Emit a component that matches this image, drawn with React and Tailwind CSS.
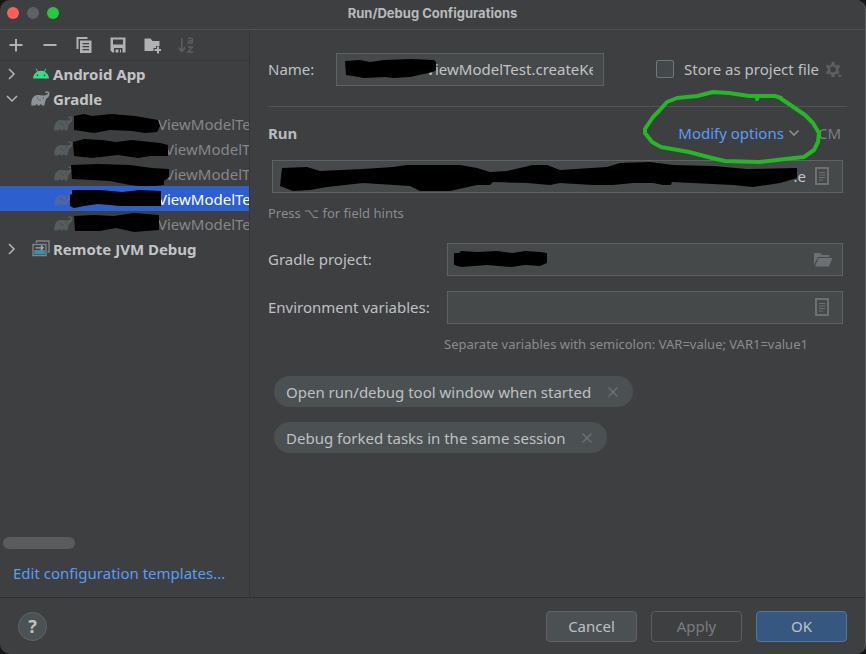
import { useState } from "react";

const tests = [
  { label: "ViewModelTest", indent: "pl-[104px]", mask: "M74 5 L84 3 L92 5 L112 3 L135 5 L158 9 L160 15 L157 21 L145 22 L132 20 L110 19 L94 22 L74 19 Z" },
  { label: "ViewModelTest", indent: "pl-[111px]", mask: "M73 6 L84 3 L102 4 L116 6 L132 4 L160 7 L168 9 L168 20 L150 20 L138 22 L118 19 L92 22 L74 20 Z" },
  { label: "ViewModelTest", indent: "pl-[111px]", mask: "M71 4 L98 3 L130 4 L152 7 L169 8 L169 16 L164 20 L164 24 L148 26 L130 24 L110 20 L72 18 Z" },
  { label: "ViewModelTest", indent: "pl-[104px]", mask: "M72 4 L100 4 L122 6 L140 4 L161 5 L161 20 L120 20 L98 18 L84 20 L74 22 L70 20 L70 9 L72 8 Z" },
  { label: "ViewModelTest", indent: "pl-[104px]", mask: "M74 5 L94 4 L114 5 L134 2 L159 4 L159 19 L134 21 L116 17 L100 20 L75 20 Z" },
];

const GradleIcon = ({ className }) => (
  <svg viewBox="0 0 19 15" className={`h-[15px] w-[19px] shrink-0 ${className}`} fill="currentColor" aria-hidden="true">
    <path d="M.4 14.500 C-.2 10 1.500 5.200 5 4.200 C8 3.300 10.500 4.600 13 4.400 C15 4.200 16.700 3.500 16.900 2.500 C17 1.600 15.800 1.300 15 2.200 L13.800 1.200 C15.200 -.4 18.200 .2 18.500 2.200 C18.800 4.600 17 6.600 15.600 7.600 C14.600 8.500 14.500 10 14.200 11.200 C13.900 12.400 13.500 13.200 13.300 14.500 L11 14.500 C10.800 12.700 9 12.700 8.800 14.500 L6.800 14.500 C6.600 12.700 4.700 12.700 4.500 14.500 Z" />
    <path d="M6.500 6 C6 8.500 8 9.800 10 8.800" fill="none" stroke="#3d3f41" strokeOpacity=".6" strokeWidth=".7" />
    <circle cx="12.300" cy="7" r=".6" fill="#3d3f41" />
  </svg>
);

const AndroidIcon = () => (
  <svg viewBox="0 0 16 11" className="h-[11px] w-4 shrink-0" fill="#3ddc84" aria-hidden="true">
    <path d="M0 10.500 C.2 7.500 1.800 5 4.200 3.700 L2.600 .8 L3.300 .4 L5 3.300 C7 2.500 9 2.500 11 3.300 L12.700 .4 L13.400 .8 L11.800 3.700 C14.200 5 15.800 7.500 16 10.500 Z" />
    <circle cx="4.500" cy="7.400" r=".8" fill="#3d3f41" />
    <circle cx="11.500" cy="7.400" r=".8" fill="#3d3f41" />
  </svg>
);

const RemoteIcon = () => (
  <svg viewBox="0 0 18 17" className="h-[17px] w-[18px] shrink-0" fill="none" aria-hidden="true">
    <path d="M4.500 3 V1 H17 V12 H15.500" stroke="#7f8487" strokeWidth="1.400" />
    <path d="M1 4.500 H14 V15.500 H1 Z" stroke="#7f8487" strokeWidth="1.400" />
    <path d="M2.200 10 H12.800 V14.300 H2.200 Z" fill="#3d8fb0" />
    <path d="M3.500 7.800 H11 M8.800 5.500 L11.200 7.800 L8.800 10" stroke="#a9adb0" strokeWidth="1.200" />
  </svg>
);

const Chevron = ({ open }) => (
  <svg viewBox="0 0 12 12" className="h-3 w-3 shrink-0" fill="none" stroke="#b4b6b8" strokeWidth="1.500" aria-hidden="true">
    <path d={open ? "M1 3 L6 8 L11 3" : "M3 1 L8 6 L3 11"} />
  </svg>
);

const NoteIcon = () => (
  <svg viewBox="0 0 14 18" className="h-[18px] w-3.5" fill="none" stroke="#6c7072" aria-hidden="true">
    <path d="M1 1 H13 V17 H1 Z" strokeWidth="2" />
    <path d="M4 5.500 H10 M4 8 H10 M4 10.500 H10 M4 13 H8" strokeWidth="1" />
  </svg>
);

const FolderIcon = () => (
  <svg viewBox="0 0 20 15" className="h-[15px] w-5" fill="#6c7072" aria-hidden="true">
    <path d="M1 13 V1 H7 L9 3 H16.500 V5 H5 Z" />
    <path d="M5.500 6 H19.500 L16 14.500 H2 Z" />
  </svg>
);

const GearIcon = () => (
  <svg viewBox="0 0 18 18" className="h-[18px] w-[18px] shrink-0" fill="none" stroke="#5d5f61" aria-hidden="true">
    <circle cx="8" cy="8.500" r="4.200" strokeWidth="2.600" />
    <path d="M8 1 V4 M8 13 V16 M1.500 4.750 L4 6.200 M12 10.800 L14 12 M1.500 12.250 L4 10.800 M12 6.200 L14.500 4.750" strokeWidth="3" />
    <path d="M11.500 13.500 H18 L14.800 17 Z" fill="#5d5f61" stroke="#3d3f41" strokeWidth=".8" />
  </svg>
);

const ToolButton = ({ label, disabled, children }) => (
  <button type="button" aria-label={label} disabled={disabled} className={disabled ? "text-[#5c5e60]" : "text-[#b0b2b4]"}>
    <svg viewBox="0 0 18 18" className="h-[18px] w-[18px]" fill="currentColor" aria-hidden="true">
      {children}
    </svg>
  </button>
);

const Toolbar = () => (
  <div className="flex h-[31px] items-center gap-4 border-b border-[#353739] px-[7px]">
    <ToolButton label="Add">
      <path d="M8 3 H10 V8 H15.500 V10 H10 V15.500 H8 V10 H2.500 V8 H8 Z" />
    </ToolButton>
    <ToolButton label="Remove">
      <path d="M2.500 8 H15.500 V10 H2.500 Z" />
    </ToolButton>
    <ToolButton label="Copy">
      <path d="M1.500 1 H12.500 V3 H3.500 V13 H1.500 Z" />
      <path fillRule="evenodd" d="M5 4.500 H16.500 V17 H5 Z M7.500 7 V8.200 H14 V7 Z M7.500 10 V11.200 H14 V10 Z M7.500 13 V14.200 H14 V13 Z" />
    </ToolButton>
    <ToolButton label="Save">
      <path fillRule="evenodd" d="M1.500 1.500 H16.500 V16.500 H13.500 V12 H5 V16.500 H3.500 L1.500 14.500 Z M4 3.500 V8.500 H14 V3.500 Z" />
      <path d="M6.500 13.500 H9.500 V16.500 H6.500 Z M11 13.500 H12 V16.500 H11 Z" />
    </ToolButton>
    <ToolButton label="New folder">
      <path d="M1.500 2.500 H7.500 L9.500 5 H16.500 V10 H13 V12 H10.500 V15 H1.500 Z" />
      <path d="M14 10.500 H16 V13 H18 V15 H16 V17.500 H14 V15 H11.500 V13 H14 Z" />
    </ToolButton>
    <ToolButton label="Sort" disabled>
      <path d="M4 2 H5.500 V13 L8 10.500 V13 L4.700 16.500 L1.500 13 V10.500 L4 13 Z" />
      <path d="M11 3 C12.500 1.500 15.500 1.800 15.500 4 V7.500 M15.500 4.800 C13 4.500 11 5 11 6.300 C11 7.800 14 7.800 15.500 6 M11 11 H15.500 L11 16 H16" fill="none" stroke="currentColor" strokeWidth="1.400" />
    </ToolButton>
  </div>
);

const Group = ({ name, open, children }) => (
  <button type="button" aria-expanded={!!open} className="flex h-[25px] w-full items-center px-1.5 text-left font-bold text-[#c2c4c6]">
    <Chevron open={open} />
    <span className="ml-2.5 flex w-[25px] items-center justify-center">{children}</span>
    <span className="whitespace-nowrap">{name}</span>
  </button>
);

const Sidebar = () => {
  const [selected, setSelected] = useState(3);

  return (
    <aside className="flex w-[250px] shrink-0 flex-col border-r border-[#333537]">
      <Toolbar />
      <div className="flex-1">
        <Group name="Android App">
          <AndroidIcon />
        </Group>
        <Group name="Gradle" open>
          <GradleIcon className="text-[#8b949b]" />
        </Group>
        {tests.map((test, i) => (
          <button
            key={i}
            type="button"
            onClick={() => setSelected(i)}
            className={`relative flex h-[25px] w-full items-center overflow-x-clip pl-[54px] text-left ${
              selected === i ? "bg-[#2d5fce] text-white" : "text-[#85878a]"
            }`}
          >
            <GradleIcon className={selected === i ? "-mr-[19px] text-[#4a68a8]" : "-mr-[19px] text-[#555c5e]"} />
            <span className={test.indent}>{test.label}</span>
            <svg viewBox="0 0 250 25" className="absolute left-0 top-0 h-[25px] w-[250px] overflow-visible" aria-hidden="true">
              <path d={test.mask} />
            </svg>
          </button>
        ))}
        <Group name="Remote JVM Debug">
          <RemoteIcon />
        </Group>
      </div>
      <div className="px-[3px]">
        <div className="h-3 w-[72px] rounded-full bg-[#595b5d]"></div>
      </div>
      <div className="px-[13px] py-3">
        <a href="#templates" className="block whitespace-nowrap leading-6 text-[#589df6]">
          Edit configuration templates...
        </a>
      </div>
    </aside>
  );
};

const inputStyle = "h-[33px] w-full border border-[#5f6264] bg-[#45494a] pb-0.5 text-[#c2c4c6] outline-none";

const Chip = ({ children }) => (
  <div className="flex h-[31px] items-center gap-4 rounded-full bg-[#4b5052] pl-3 pr-3.5 text-[#bfc1c3]">
    <span>{children}</span>
    <button type="button" aria-label={`Remove ${children}`}>
      <svg viewBox="0 0 12 12" className="h-3 w-3" fill="none" stroke="#6f7274" strokeWidth="1.300" aria-hidden="true">
        <path d="M1.500 1.500 L10.500 10.500 M10.500 1.500 L1.500 10.500" />
      </svg>
    </button>
  </div>
);

const ConfigForm = () => (
  <main className="min-w-0 flex-1 pl-[18px] pr-[18px] pt-[23px]">
    <div className="flex items-center border-b border-[#515355] pb-5">
      <label htmlFor="name" className="w-[68px] pb-0.5">
        Name:
      </label>
      <div className="relative w-[268px]">
        <input id="name" defaultValue="ViewModelTest.createKey" className={`${inputStyle} pl-[89px] pr-2.5`} />
        <svg viewBox="0 0 268 33" className="absolute left-0 top-0 h-[33px] w-[268px]" aria-hidden="true">
          <path d="M9 8 L24 7 L34 9 L48 7 L75 6 L98 7 L100 9 L100 17 L97 19 L88 21 L74 24 L58 25 L50 24 L28 25 L10 22 Z" />
        </svg>
      </div>
      <label className="ml-auto flex items-center gap-2.5 whitespace-nowrap pb-0.5">
        <input type="checkbox" className="h-[18px] w-[18px] appearance-none rounded-xs border border-[#727577] bg-[#43494a]" />
        Store as project file
      </label>
      <button type="button" aria-label="Storage settings" className="ml-1.5 mr-1">
        <GearIcon />
      </button>
    </div>

    <div className="flex h-[53px] items-center pb-0.5">
      <h2 className="font-bold text-[#b9bbbd]">Run</h2>
      <div className="relative ml-auto">
        <button type="button" className="flex items-center gap-1 text-[#589df6]">
          Modify options
          <svg viewBox="0 0 12 12" className="h-3 w-3" fill="none" stroke="#8b8d8f" strokeWidth="1.600" aria-hidden="true">
            <path d="M1.500 3.500 L6 8 L10.500 3.500" />
          </svg>
        </button>
        <svg
          viewBox="640 88 190 80"
          className="pointer-events-none absolute -right-[29px] -top-[34px] z-10 h-20 w-[190px] max-w-none"
          fill="none"
          stroke="#22b922"
          strokeWidth="4"
          strokeLinecap="round"
          strokeLinejoin="round"
          aria-hidden="true"
        >
          <path d="M782 98 L776 96 L750 96 L730 93 L714 92 L698 96 L678 98 L668 102 L660 111 L654 117 L646 129 L646 133 L653 142 L662 147 L690 152 L713 158 L726 161 L760 162 L786 159 L805 157 L815 150 L819 142 L820 133 L814 123 L806 115 L790 104 L781 98 M758 99 L759 97" />
        </svg>
      </div>
      <span className="ml-[18px] mr-1.5 text-[#7c7e80]">CM</span>
    </div>

    <div className="relative ml-1 mr-1">
      <input aria-label="Run tasks" defaultValue=".e" className={`${inputStyle} pl-3 pr-[36px] text-right`} />
      <svg viewBox="0 0 571 33" preserveAspectRatio="none" className="absolute left-0 top-0 h-full w-full" aria-hidden="true">
        <path d="M10 8 L35 7 L48 11 L91 9 L121 7 L135 5 L188 5 L205 8 L218 12 L235 11 L261 5 L275 5 L288 10 L335 7 L348 3 L378 2 L401 5 L441 6 L475 9 L525 8 L525 18 L508 23 L481 27 L461 25 L400 22 L399 25 L391 25 L381 23 L361 23 L341 25 L321 25 L288 23 L278 25 L255 23 L221 22 L218 25 L205 25 L178 31 L148 31 L138 26 L91 23 L55 27 L38 30 L21 31 L8 26 Z" />
      </svg>
      <button type="button" aria-label="Expand tasks" className="absolute right-3.5 top-[7px]">
        <NoteIcon />
      </button>
    </div>
    <p className="mt-2.5 text-[13px] leading-5 text-[#8a8c8e]">Press ⌥ for field hints</p>

    <div className="mt-5 flex items-center pr-1">
      <label htmlFor="project" className="w-[179px] shrink-0 pb-0.5">
        Gradle project:
      </label>
      <div className="relative flex-1">
        <input id="project" className={`${inputStyle} pl-2.5 pr-10`} />
        <svg viewBox="0 0 120 33" className="absolute left-0 top-0 h-[33px] w-[120px]" aria-hidden="true">
          <path d="M7 10 L12 10 L14 8 L30 9 L50 8 L66 10 L78 8 L93 9 L100 10 L100 20 L93 23 L78 22 L64 24 L40 22 L14 24 L7 22 Z" />
        </svg>
        <button type="button" aria-label="Browse" className="absolute right-2.5 top-[9px]">
          <FolderIcon />
        </button>
      </div>
    </div>
    <div className="mt-[15px] flex items-center pr-1">
      <label htmlFor="env" className="w-[179px] shrink-0 whitespace-nowrap pb-0.5">
        Environment variables:
      </label>
      <div className="relative flex-1">
        <input id="env" className={`${inputStyle} pl-2.5 pr-10`} />
        <button type="button" aria-label="Edit variables" className="absolute right-3.5 top-[7px]">
          <NoteIcon />
        </button>
      </div>
    </div>
    <p className="ml-44 mt-2.5 text-[13px] leading-5 text-[#8a8c8e]">
      Separate variables with semicolon: VAR=value; VAR1=value1
    </p>

    <div className="ml-1.5 mt-[22px] flex flex-col items-start gap-[15px]">
      <Chip>Open run/debug tool window when started</Chip>
      <Chip>Debug forked tasks in the same session</Chip>
    </div>
  </main>
);

const Footer = () => (
  <footer className="flex h-[57px] items-center gap-3.5 border-t border-[#2f3133] pl-[18px] pr-[18px]">
    <button
      type="button"
      aria-label="Help"
      className="mr-auto h-[29px] w-[29px] rounded-full border border-[#5f6466] bg-[#4c5153] text-lg font-bold leading-none"
    >
      ?
    </button>
    <button type="button" className="h-[31px] w-[91px] rounded-sm border border-[#606466] bg-[#4b5052]">
      Cancel
    </button>
    <button type="button" className="h-[31px] w-[91px] rounded-sm border border-[#5b5e60] text-[#7a7c7e]">
      Apply
    </button>
    <button type="button" className="h-[31px] w-[91px] rounded-sm border border-[#4d7a9c] bg-[#365880]">
      OK
    </button>
  </footer>
);

const App = () => {
  return (
    <div className="min-h-screen bg-[#151617]">
      <div className="flex min-h-screen flex-col overflow-hidden rounded-[10px] border-r border-[#5c5e60] bg-[#3d3f41] font-['Noto_Sans',sans-serif] text-[15px] leading-[22px] text-[#bfc1c3]">
        <header className="relative flex h-[30px] items-center border-b border-[#505254] pb-1">
          <div className="absolute left-[7px] flex gap-2">
            <span className="h-3 w-3 rounded-full bg-[#ff5f57]"></span>
            <span className="h-3 w-3 rounded-full bg-[#5f6164]"></span>
            <span className="h-3 w-3 rounded-full bg-[#28c840]"></span>
          </div>
          <h1 className="flex-1 text-center font-['Inter',sans-serif] text-[13px] font-bold text-[#b8babc]">
            Run/Debug Configurations
          </h1>
        </header>
        <div className="flex flex-1">
          <Sidebar />
          <ConfigForm />
        </div>
        <Footer />
      </div>
    </div>
  );
};

export default App;
